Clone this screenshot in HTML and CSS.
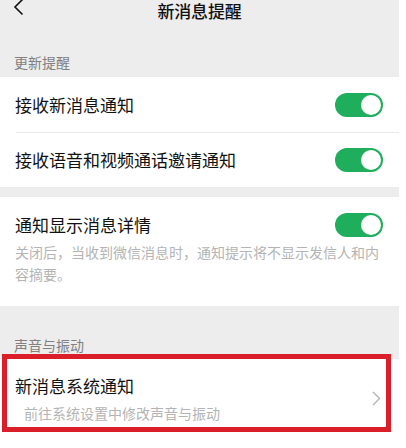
FILE: index.html
```html
<!DOCTYPE html>
<html lang="zh-CN">
<head>
<meta charset="utf-8">
<title>新消息提醒</title>
<link rel="stylesheet" href="styles.css">
</head>
<body>
<div class="screen">
  <header class="nav">
    <svg class="back" width="12" height="17" viewBox="0 0 12 17">
      <path d="M9.5 0.5 L2 8 L9.5 15.5" fill="none" stroke="#111" stroke-width="1.6"/>
    </svg>
    <h1 class="nav-title">新消息提醒</h1>
  </header>

  <div class="section-label">更新提醒</div>
  <section class="group">
    <div class="row row-first">
      <span class="row-title">接收新消息通知</span>
      <span class="switch on"><span class="knob"></span></span>
    </div>
    <div class="divider"></div>
    <div class="row row-second">
      <span class="row-title">接收语音和视频通话邀请通知</span>
      <span class="switch on"><span class="knob"></span></span>
    </div>
  </section>

  <section class="group group-detail">
    <div class="detail-head">
      <span class="row-title">通知显示消息详情</span>
      <span class="switch on"><span class="knob"></span></span>
    </div>
    <p class="detail-desc">关闭后，当收到微信消息时，通知提示将不显示发信人和内容摘要。</p>
  </section>

  <div class="section-label section-label-sound">声音与振动</div>
  <section class="group group-link">
    <div class="link-row">
      <div class="link-text">
        <span class="row-title">新消息系统通知</span>
        <span class="link-sub">前往系统设置中修改声音与振动</span>
      </div>
      <svg class="chevron" width="9" height="15" viewBox="0 0 9 15">
        <path d="M1 1 L7.5 7.5 L1 14" fill="none" stroke="#b5b5b5" stroke-width="1.4"/>
      </svg>
    </div>
    <div class="highlight"></div>
  </section>
</div>
</body>
</html>
```

FILE: styles.css
```css
* {
  box-sizing: border-box;
}

html, body {
  margin: 0;
  padding: 0;
  background: #ffffff;
}

body {
  width: 406px;
  height: 448px;
  overflow: hidden;
  font-family: "Noto Sans CJK SC", "Noto Sans", sans-serif;
  color: #111111;
}

.screen {
  width: 399px;
  height: 448px;
  background: #ededed;
  position: relative;
}

/* top navigation bar */
.nav {
  height: 22px;
  padding-top: 1px;
  display: flex;
  align-items: flex-start;
  justify-content: center;
  position: relative;
}

.back {
  position: absolute;
  left: 13px;
  top: -1px;
}

.nav-title {
  margin: 0;
  font-size: 17px;
  font-weight: 500;
  line-height: 19px;
  letter-spacing: -0.2px;
}

/* grey section captions */
.section-label {
  padding: 30px 0 5px 14px;
  font-size: 14px;
  line-height: 20px;
  color: #808080;
}

.section-label-sound {
  padding-top: 29px;
  padding-bottom: 4px;
}

/* white cell groups */
.group {
  background: #ffffff;
}

.group + .group {
  margin-top: 10px;
}

.row {
  display: flex;
  align-items: center;
  justify-content: space-between;
  padding: 0 16px 0 15px;
}

.row-first {
  height: 55px;
}

.row-second {
  height: 54px;
}

.row-title {
  font-size: 17px;
  line-height: 24px;
  color: #111111;
}

.divider {
  height: 1px;
  margin-left: 16px;
  background: #e9e9e9;
}

/* toggle switch */
.switch {
  width: 48px;
  height: 24px;
  border-radius: 12px;
  background: #e5e5e5;
  position: relative;
  flex: none;
}

.switch.on {
  background: #1fae5c;
}

.knob {
  position: absolute;
  top: 2px;
  left: 2px;
  width: 20px;
  height: 20px;
  border-radius: 50%;
  background: #ffffff;
}

.switch.on .knob {
  left: 26px;
}

/* detail preference with explanation */
.group-detail {
  padding: 16px 16px 21px 15px;
}

.detail-head {
  display: flex;
  align-items: center;
  justify-content: space-between;
}

.detail-desc {
  margin: 4px 1px 0 0;
  font-size: 14px;
  line-height: 22px;
  color: #b4b4b4;
}

/* link row to system settings */
.group-link {
  position: relative;
  height: 89px;
}

.link-row {
  height: 77px;
  display: flex;
  align-items: center;
  justify-content: space-between;
  padding: 0 18px 0 15px;
}

.link-text {
  display: flex;
  flex-direction: column;
  padding-top: 2px;
}

.link-sub {
  margin-top: 4px;
  padding-left: 9px;
  font-size: 14px;
  line-height: 22px;
  color: #b4b4b4;
}

.chevron {
  flex: none;
  margin-top: 2px;
}

/* red annotation frame over the row */
.highlight {
  position: absolute;
  left: 2px;
  top: -5px;
  width: 389px;
  height: 78px;
  border: 5px solid #da1f2b;
  pointer-events: none;
}
```
